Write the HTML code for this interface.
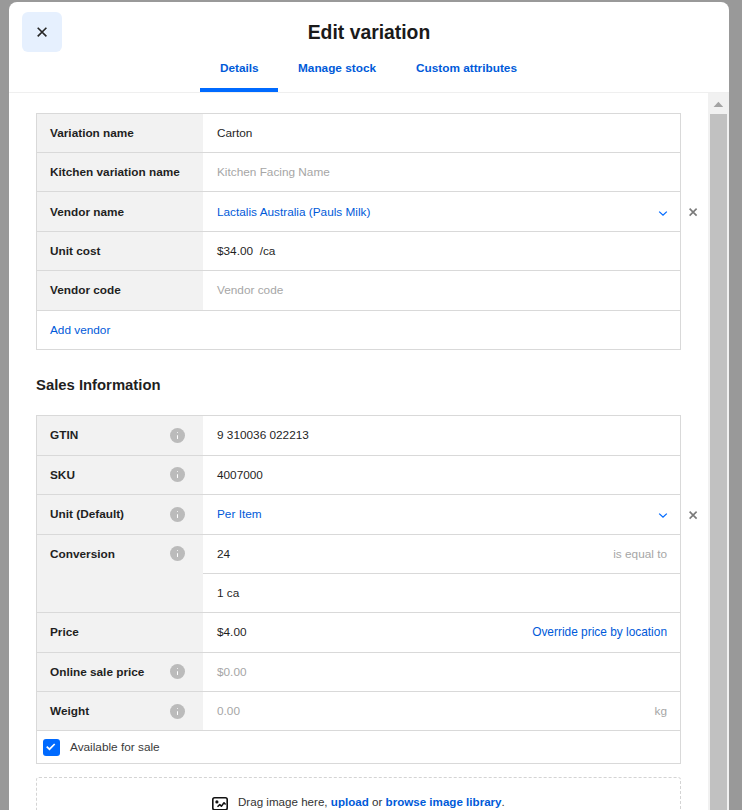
<!DOCTYPE html>
<html>
<head>
<meta charset="utf-8">
<style>
*{box-sizing:border-box;margin:0;padding:0}
html,body{width:742px;height:810px;overflow:hidden;background:#999999;font-family:"Liberation Sans",sans-serif;color:#1f1f1f}
.modal{position:absolute;left:9px;top:2px;width:720px;height:860px;background:#fff;border-radius:8px;overflow:hidden}
.abs{position:absolute}
.close{position:absolute;left:13px;top:10px;width:40px;height:40px;background:#e6f0fe;border-radius:6px}
.close svg{position:absolute;left:15px;top:15px}
.title{position:absolute;left:0;width:720px;top:18px;text-align:center;font-size:19.35px;font-weight:bold;color:#1a1a1a;line-height:24px}
.tab{position:absolute;top:58px;font-size:11.8px;font-weight:bold;color:#005ad9;line-height:16px;white-space:nowrap}
.uline{position:absolute;left:191px;top:86px;width:78px;height:4px;background:#006aff}
.divider{position:absolute;left:0;top:90px;width:720px;height:1px;background:#efefef}
.sb{position:absolute;left:699px;top:91px;width:21px;height:800px;background:#f1f1f1}
.thumb{position:absolute;left:2px;top:21px;width:17px;height:800px;background:#c1c1c1}
.arrow{position:absolute;left:5px;top:9px;width:0;height:0;border-left:5px solid transparent;border-right:5px solid transparent;border-bottom:5px solid #a3a3a3}
/* content coordinates relative to page; use page wrapper */
.page{position:absolute;left:0;top:0;width:742px;height:810px}
.tbl{position:absolute;left:36px;width:645px;border:1px solid #d9d9d9;background:#fff}
.lab{position:absolute;left:0;width:166px;background:#f2f2f2}
.row{position:absolute;left:0;width:643px;height:1px;background:#d9d9d9}
.t{position:absolute;font-size:11.8px;line-height:14px;white-space:nowrap;color:#1f1f1f}
.b{font-weight:bold}
.ph{color:#a6a6a6}
.lnk{color:#005ad9}
.info{position:absolute;width:15px;height:15px;border-radius:50%;background:#bbbbbb}
.info:before{content:"";position:absolute;left:6.7px;top:3.7px;width:1.8px;height:1.8px;background:#fff;border-radius:1px}
.info:after{content:"";position:absolute;left:6.7px;top:6.6px;width:1.8px;height:4.3px;background:#fff;border-radius:0.5px}
</style>
</head>
<body>
<div class="modal">
  <div class="close"><svg width="10" height="10" viewBox="0 0 10 10"><path d="M0.7 0.7L9.4 9.4M9.4 0.7L0.7 9.4" stroke="#262626" stroke-width="1.6" stroke-linecap="butt"/></svg></div>
  <div class="title">Edit variation</div>
  <div class="tab" style="left:211px">Details</div>
  <div class="tab" style="left:289px">Manage stock</div>
  <div class="tab" style="left:407px">Custom attributes</div>
  <div class="uline"></div>
  <div class="divider"></div>
  <div class="sb"><svg style="position:absolute;left:0;top:0" width="21" height="20" viewBox="0 0 21 20"><polygon points="5.6,13.9 15.2,13.9 10.4,8.8" fill="#a3a3a3"/></svg><div class="thumb"></div></div>
</div>
<div class="page">
  <!-- vendor table: top 113 bottom 349 -->
  <div class="tbl" style="top:113px;height:237px">
    <div class="lab" style="top:0;height:196px"></div>
    <div class="row" style="top:38px"></div>
    <div class="row" style="top:77px"></div>
    <div class="row" style="top:117px"></div>
    <div class="row" style="top:156px"></div>
    <div class="row" style="top:196px"></div>
  </div>
  <div class="t b" style="left:50px;top:126px">Variation name</div>
  <div class="t" style="left:217px;top:126px">Carton</div>
  <div class="t b" style="left:50px;top:165px">Kitchen variation name</div>
  <div class="t ph" style="left:217px;top:165px">Kitchen Facing Name</div>
  <div class="t b" style="left:50px;top:205px">Vendor name</div>
  <div class="t lnk" style="left:217px;top:205px">Lactalis Australia (Pauls Milk)</div>
  <svg class="abs" style="left:658px;top:210px" width="10" height="7" viewBox="0 0 10 7"><path d="M1.2 1.6L5 5.2L8.8 1.6" fill="none" stroke="#006aff" stroke-width="1.3"/></svg>
  <svg class="abs" style="left:688px;top:207px" width="10" height="10" viewBox="0 0 10 10"><path d="M1.6 1.6L8.6 8.6M8.6 1.6L1.6 8.6" fill="none" stroke="#7a7a7a" stroke-width="1.6"/></svg>
  <div class="t b" style="left:50px;top:244px">Unit cost</div>
  <div class="t" style="left:217px;top:244px">$34.00&nbsp; /ca</div>
  <div class="t b" style="left:50px;top:283px">Vendor code</div>
  <div class="t ph" style="left:217px;top:283px">Vendor code</div>
  <div class="t lnk" style="left:50px;top:323px">Add vendor</div>

  <div class="t b" style="left:36px;top:376px;font-size:14.85px;line-height:18px">Sales Information</div>

  <!-- sales table: top 415 bottom 763 -->
  <div class="tbl" style="top:415px;height:349px">
    <div class="lab" style="top:0;height:315px"></div>
    <div class="row" style="top:39px"></div>
    <div class="row" style="top:78px"></div>
    <div class="row" style="top:118px"></div>
    <div class="row" style="top:157px;left:166px;width:477px"></div>
    <div class="row" style="top:196px"></div>
    <div class="row" style="top:236px"></div>
    <div class="row" style="top:275px"></div>
    <div class="row" style="top:314px"></div>
  </div>
  <div class="t b" style="left:50px;top:428px">GTIN</div>
  <div class="info" style="left:170px;top:428px"></div>
  <div class="t" style="left:217px;top:428px">9 310036 022213</div>
  <div class="t b" style="left:50px;top:468px">SKU</div>
  <div class="info" style="left:170px;top:467px"></div>
  <div class="t" style="left:217px;top:468px">4007000</div>
  <div class="t b" style="left:50px;top:507px">Unit (Default)</div>
  <div class="info" style="left:170px;top:507px"></div>
  <div class="t lnk" style="left:217px;top:507px">Per Item</div>
  <svg class="abs" style="left:658px;top:512px" width="10" height="7" viewBox="0 0 10 7"><path d="M1.2 1.6L5 5.2L8.8 1.6" fill="none" stroke="#006aff" stroke-width="1.3"/></svg>
  <svg class="abs" style="left:688px;top:510px" width="10" height="10" viewBox="0 0 10 10"><path d="M1.6 1.6L8.6 8.6M8.6 1.6L1.6 8.6" fill="none" stroke="#7a7a7a" stroke-width="1.6"/></svg>
  <div class="t b" style="left:50px;top:547px">Conversion</div>
  <div class="info" style="left:170px;top:546px"></div>
  <div class="t" style="left:217px;top:547px">24</div>
  <div class="t ph" style="right:75px;top:547px">is equal to</div>
  <div class="t" style="left:217px;top:586px">1 ca</div>
  <div class="t b" style="left:50px;top:625px">Price</div>
  <div class="t" style="left:217px;top:625px">$4.00</div>
  <div class="t lnk" style="right:75px;top:625px;font-size:11.9px">Override price by location</div>
  <div class="t b" style="left:50px;top:665px">Online sale price</div>
  <div class="info" style="left:170px;top:664px"></div>
  <div class="t ph" style="left:217px;top:665px">$0.00</div>
  <div class="t b" style="left:50px;top:704px">Weight</div>
  <div class="info" style="left:170px;top:704px"></div>
  <div class="t ph" style="left:217px;top:704px">0.00</div>
  <div class="t ph" style="right:75px;top:704px">kg</div>
  <div class="abs" style="left:43px;top:739px;width:17px;height:17px;background:#006aff;border-radius:3px">
    <svg class="abs" style="left:0;top:0" width="17" height="17" viewBox="0 0 17 17"><path d="M3.7 7.6L6.5 10.2L11.7 5" fill="none" stroke="#fff" stroke-width="1.7"/></svg>
  </div>
  <div class="t" style="left:70px;top:740px;color:#3a3a3a">Available for sale</div>

  <div class="abs" style="left:36px;top:777px;width:645px;height:100px;border:1px dashed #d4d4d4;border-radius:3px"></div>
  <svg class="abs" style="left:212px;top:797px" width="16" height="13" viewBox="0 0 16 13"><rect x="0.8" y="0.8" width="14.4" height="12" rx="1.8" fill="none" stroke="#111" stroke-width="1.6"/><circle cx="4.9" cy="4.9" r="1.6" fill="#111"/><path d="M5.5 9.7L7.8 7.6L9.4 9.2L12 5.7L13.6 7.5" fill="none" stroke="#111" stroke-width="1.5" stroke-linejoin="round"/></svg>
  <div class="t" style="left:238px;top:795px;color:#333;font-size:11.6px">Drag image here, <span class="b lnk">upload</span> or <span class="b lnk">browse image library</span>.</div>
</div>
</body>
</html>
